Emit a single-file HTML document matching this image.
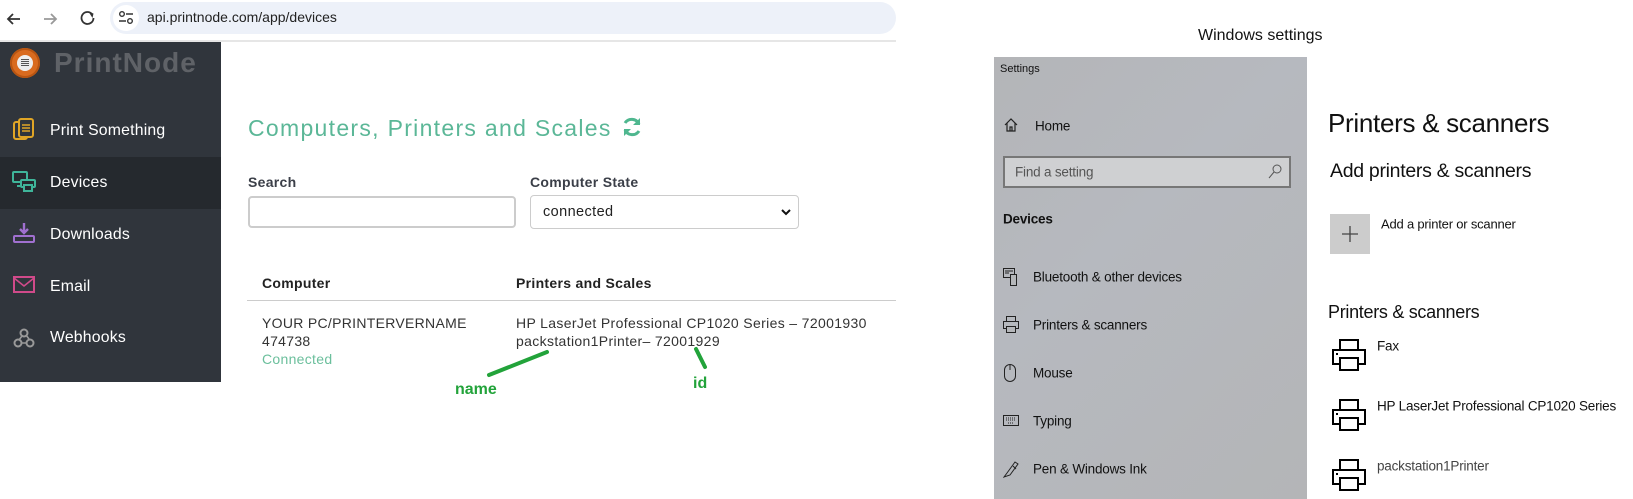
<!DOCTYPE html>
<html><head><meta charset="utf-8"><style>
*{margin:0;padding:0;box-sizing:border-box}
body{width:1633px;height:499px;background:#fff;position:relative;overflow:hidden;font-family:"Liberation Sans",sans-serif;color:#222}
.a{position:absolute;white-space:nowrap}
.m{font-size:15.8px;color:#fff;transform:translateY(-50%);letter-spacing:0.2px}
.w{font-size:13.5px;color:#111;transform:translateY(-50%);letter-spacing:-0.2px}
</style></head><body>
<svg class="a" style="left:4px;top:8px" width="100" height="22" viewBox="0 0 100 22">
<path d="M16 11H4M9 6L4 11L9 16" stroke="#333" stroke-width="1.8" fill="none"/>
<path d="M40 11H52M47 6L52 11L47 16" stroke="#999" stroke-width="1.8" fill="none"/>
<path d="M88 6A6 6 0 1 0 89.5 10" stroke="#333" stroke-width="1.8" fill="none"/><path d="M85 4.5L89.5 5.5L88.5 10" fill="#333"/>
</svg>
<div class="a" style="left:110px;top:2px;width:786px;height:32px;border-radius:16px;background:#edf1f9"></div>
<div class="a" style="left:113px;top:5px;width:26px;height:26px;border-radius:13px;background:#fff"></div>
<svg class="a" style="left:118px;top:11px" width="16" height="14"><circle cx="4" cy="3" r="2.3" stroke="#333" stroke-width="1.4" fill="none"/><path d="M8 3H15M1 10H8" stroke="#333" stroke-width="1.4"/><circle cx="12" cy="10" r="2.3" stroke="#333" stroke-width="1.4" fill="none"/></svg>
<div class="a" style="left:147px;top:9px;font-size:14px;color:#222">api.printnode.com/app/devices</div>
<div class="a" style="left:0;top:40px;width:896px;height:2px;background:#e6e6e6"></div>
<div class="a" style="left:0;top:42px;width:221px;height:340px;background:#30353c"></div>
<div class="a" style="left:0;top:157px;width:221px;height:52px;background:#25292e"></div>
<div class="a" style="left:10px;top:48px;width:30px;height:30px;border-radius:50%;background:#d96b1f;box-shadow:inset 0 0 0 2px #b85512"></div>
<div class="a" style="left:17px;top:55px;width:16px;height:16px;border-radius:50%;background:#eee"></div>
<div class="a" style="left:21px;top:59px;width:8px;height:8px;background:repeating-linear-gradient(#555 0 1px,#eee 1px 2px)"></div>
<div class="a" style="left:54px;top:47px;font-size:28px;font-weight:bold;color:#5f6267;letter-spacing:1px">PrintNode</div>
<svg class="a" style="left:13px;top:118px" width="22" height="24"><rect x="1" y="4" width="13" height="17" rx="2" stroke="#e0a526" stroke-width="2" fill="none"/><rect x="6" y="1" width="14" height="18" rx="2" stroke="#e0a526" stroke-width="2" fill="#30353c"/><path d="M9 7H17M9 10H17M9 13H17" stroke="#e0a526" stroke-width="1.4"/></svg>
<div class="a m" style="left:50px;top:131px">Print Something</div>
<svg class="a" style="left:12px;top:171px" width="24" height="22"><rect x="1" y="1" width="14" height="10" rx="1" stroke="#3fb59a" stroke-width="2" fill="none"/><path d="M5 15H9" stroke="#3fb59a" stroke-width="2"/><rect x="9" y="9" width="14" height="7" rx="1" stroke="#3fb59a" stroke-width="2" fill="#25292e"/><rect x="12" y="14" width="8" height="6" stroke="#3fb59a" stroke-width="2" fill="#25292e"/></svg>
<div class="a m" style="left:50px;top:183px">Devices</div>
<svg class="a" style="left:13px;top:222px" width="22" height="22"><path d="M11 1V11M7 7L11 11L15 7" stroke="#a070d0" stroke-width="2.4" fill="none"/><rect x="1" y="14" width="20" height="6" rx="1" stroke="#a070d0" stroke-width="2" fill="none"/></svg>
<div class="a m" style="left:50px;top:235px">Downloads</div>
<svg class="a" style="left:13px;top:276px" width="22" height="18"><rect x="1" y="1" width="20" height="15" stroke="#d04a8a" stroke-width="2" fill="none"/><path d="M1 2L11 10L21 2" stroke="#d04a8a" stroke-width="1.6" fill="none"/></svg>
<div class="a m" style="left:50px;top:287px">Email</div>
<svg class="a" style="left:13px;top:327px" width="22" height="22"><circle cx="11" cy="6" r="3.5" stroke="#999" stroke-width="2" fill="none"/><circle cx="5" cy="16" r="3.5" stroke="#999" stroke-width="2" fill="none"/><circle cx="17" cy="16" r="3.5" stroke="#999" stroke-width="2" fill="none"/><path d="M9 9L6 13M8.5 16H13.5M13 8L16 12" stroke="#999" stroke-width="1.6"/></svg>
<div class="a m" style="left:50px;top:338px">Webhooks</div>
<div class="a" style="left:248px;top:115px;font-size:23px;color:#5bb797;letter-spacing:1.3px">Computers, Printers and Scales</div>
<svg class="a" style="left:621px;top:116px" width="22" height="22" viewBox="0 0 22 22"><path d="M18 8A8 8 0 0 0 4 7M4 14A8 8 0 0 0 18 15" stroke="#4fb78f" stroke-width="3" fill="none"/><path d="M19 2V9H12Z M3 20V13H10Z" fill="#4fb78f"/></svg>
<div class="a" style="left:248px;top:174px;font-size:14px;font-weight:bold;color:#3b3f48;letter-spacing:0.3px">Search</div>
<div class="a" style="left:248px;top:196px;width:268px;height:32px;border:2px solid #ccc;border-radius:4px"></div>
<div class="a" style="left:530px;top:174px;font-size:14px;font-weight:bold;color:#3b3f48;letter-spacing:0.3px">Computer State</div>
<div class="a" style="left:530px;top:195px;width:269px;height:34px;border:1px solid #ccc;border-radius:4px"></div>
<div class="a" style="left:543px;top:204px;font-size:14.5px;color:#222;letter-spacing:0.4px">connected</div>
<svg class="a" style="left:781px;top:208px" width="10" height="8"><path d="M1 2L5 6L9 2" stroke="#111" stroke-width="2" fill="none"/></svg>
<div class="a" style="left:262px;top:275px;font-size:14px;font-weight:bold;color:#222;letter-spacing:0.3px">Computer</div>
<div class="a" style="left:516px;top:275px;font-size:14px;font-weight:bold;color:#222;letter-spacing:0.3px">Printers and Scales</div>
<div class="a" style="left:247px;top:300px;width:649px;height:1px;background:#ccc"></div>
<div class="a" style="left:262px;top:314px;font-size:14px;line-height:18px;color:#333;letter-spacing:0.3px">YOUR PC/PRINTERVERNAME<br>474738<br><span style="color:#6bbf9c">Connected</span></div>
<div class="a" style="left:516px;top:314px;font-size:14px;line-height:18px;color:#333;letter-spacing:0.35px">HP LaserJet Professional CP1020 Series – 72001930<br>packstation1Printer– 72001929</div>
<svg class="a" style="left:480px;top:345px" width="250" height="35"><path d="M9 30L67 7M216 4L225 22" stroke="#22a33a" stroke-width="4" stroke-linecap="round"/></svg>
<div class="a" style="left:455px;top:381px;font-size:16px;font-weight:bold;color:#22a33a">name</div>
<div class="a" style="left:693px;top:375px;font-size:16px;font-weight:bold;color:#22a33a">id</div>
<div class="a" style="left:1198px;top:27px;font-size:16px;color:#111">Windows settings</div>
<div class="a" style="left:994px;top:57px;width:313px;height:442px;background:linear-gradient(135deg,#b4b5b8,#b6b9bf 40%,#b4b5b7)"></div>
<div class="a" style="left:1000px;top:63px;font-size:11px;color:#111">Settings</div>
<svg class="a" style="left:1003px;top:117px" width="16" height="16"><path d="M2 8L8 2L14 8M4 6V14H12V6M7 14V10H9V14" stroke="#222" stroke-width="1.2" fill="none"/></svg>
<div class="a w" style="left:1035px;top:126px">Home</div>
<div class="a" style="left:1003px;top:156px;width:288px;height:32px;border:2px solid #777;background:#cfd0d2"></div>
<div class="a w" style="left:1015px;top:172px;color:#555">Find a setting</div>
<svg class="a" style="left:1268px;top:164px" width="14" height="16"><circle cx="9" cy="5" r="4" stroke="#555" fill="none"/><path d="M6 8L1 14" stroke="#555"/></svg>
<div class="a w" style="left:1003px;top:219px;font-weight:bold">Devices</div>
<svg class="a" style="left:1003px;top:268px" width="16" height="18"><rect x="0.5" y="0.5" width="11" height="9" stroke="#222" fill="none"/><rect x="7.5" y="6.5" width="6" height="11" stroke="#222" fill="#b5b7ba"/><path d="M2 3H10M2 5H6" stroke="#222"/></svg>
<div class="a w" style="left:1033px;top:277px">Bluetooth &amp; other devices</div>
<svg class="a" style="left:1003px;top:316px" width="16" height="18"><rect x="3.5" y="0.5" width="9" height="5" stroke="#222" fill="none"/><rect x="0.5" y="5.5" width="15" height="7" stroke="#222" fill="none"/><rect x="3.5" y="10.5" width="9" height="6" stroke="#222" fill="#b5b7ba"/></svg>
<div class="a w" style="left:1033px;top:325px">Printers &amp; scanners</div>
<svg class="a" style="left:1004px;top:364px" width="12" height="18"><rect x="0.5" y="0.5" width="11" height="17" rx="5.5" stroke="#222" fill="none"/><path d="M6 1V6" stroke="#222"/></svg>
<div class="a w" style="left:1033px;top:373px">Mouse</div>
<svg class="a" style="left:1003px;top:415px" width="16" height="11"><rect x="0.5" y="0.5" width="15" height="10" stroke="#222" fill="none"/><path d="M3 3H13M3 5H13M5 8H11" stroke="#222" stroke-dasharray="1 1"/></svg>
<div class="a w" style="left:1033px;top:421px">Typing</div>
<svg class="a" style="left:1003px;top:460px" width="16" height="18"><path d="M1 17L4 13L12 2L15 4L7 15ZM10 6L13 9" stroke="#222" fill="none"/></svg>
<div class="a w" style="left:1033px;top:469px">Pen &amp; Windows Ink</div>
<div class="a" style="left:1328px;top:108px;font-size:26px;color:#111;letter-spacing:-0.3px">Printers &amp; scanners</div>
<div class="a" style="left:1330px;top:160px;font-size:19.5px;color:#111;letter-spacing:-0.3px">Add printers &amp; scanners</div>
<div class="a" style="left:1330px;top:214px;width:40px;height:40px;background:#cccccc"></div>
<svg class="a" style="left:1340px;top:224px" width="20" height="20"><path d="M10 2V18M2 10H18" stroke="#444" stroke-width="1.3"/></svg>
<div class="a w" style="left:1381px;top:224px;font-size:13px">Add a printer or scanner</div>
<div class="a" style="left:1328px;top:302px;font-size:18px;color:#111;letter-spacing:-0.3px">Printers &amp; scanners</div>
<svg class="a" style="left:1332px;top:339px" width="34" height="32"><rect x="8" y="1" width="18" height="10" stroke="#000" stroke-width="2" fill="none"/><rect x="1" y="11" width="32" height="14" stroke="#000" stroke-width="2" fill="none"/><rect x="8" y="19" width="18" height="12" stroke="#000" stroke-width="2" fill="#fff"/><rect x="4" y="14" width="2" height="2"/></svg>
<div class="a w" style="left:1377px;top:346px">Fax</div>
<svg class="a" style="left:1332px;top:399px" width="34" height="32"><rect x="8" y="1" width="18" height="10" stroke="#000" stroke-width="2" fill="none"/><rect x="1" y="11" width="32" height="14" stroke="#000" stroke-width="2" fill="none"/><rect x="8" y="19" width="18" height="12" stroke="#000" stroke-width="2" fill="#fff"/><rect x="4" y="14" width="2" height="2"/></svg>
<div class="a w" style="left:1377px;top:406px">HP LaserJet Professional CP1020 Series</div>
<svg class="a" style="left:1332px;top:459px" width="34" height="32"><rect x="8" y="1" width="18" height="10" stroke="#000" stroke-width="2" fill="none"/><rect x="1" y="11" width="32" height="14" stroke="#000" stroke-width="2" fill="none"/><rect x="8" y="19" width="18" height="12" stroke="#000" stroke-width="2" fill="#fff"/><rect x="4" y="14" width="2" height="2"/></svg>
<div class="a w" style="left:1377px;top:466px;color:#444">packstation1Printer</div>
</body></html>
